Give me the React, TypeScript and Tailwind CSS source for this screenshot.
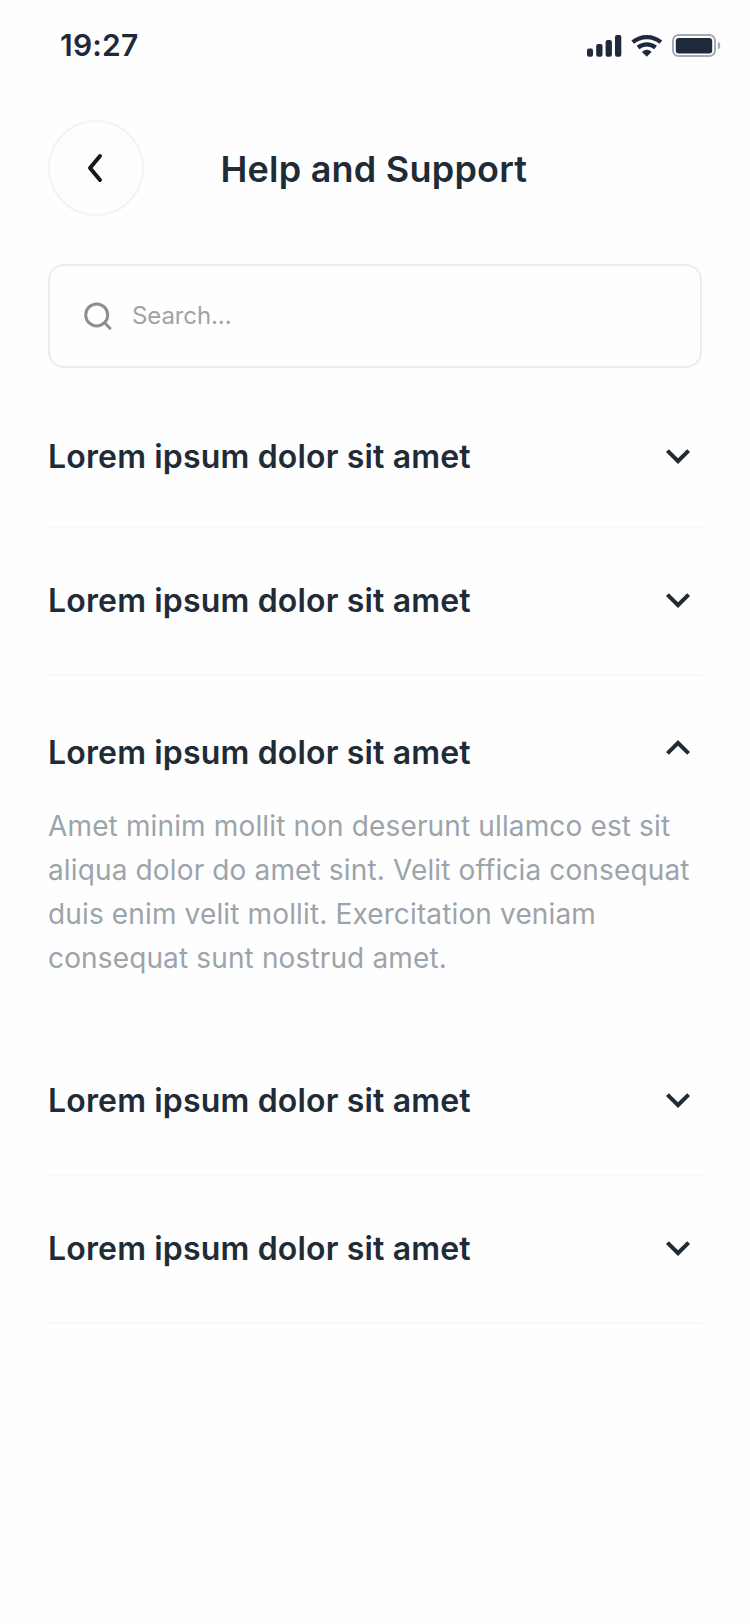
import { useState } from "react";

const QUESTION = "Lorem ipsum dolor sit amet";
const ANSWER =
  "Amet minim mollit non deserunt ullamco est sit aliqua dolor do amet sint. Velit officia consequat duis enim velit mollit. Exercitation veniam consequat sunt nostrud amet.";

function StatusBar() {
  return (
    <header className="flex h-[92px] items-center justify-between pr-[28px] pl-[60px] text-[#1e293b]">
      <time className="-mt-[2px] text-[30px] leading-[36px] font-semibold tracking-[0.2px]">19:27</time>
      <svg width="136" height="24" viewBox="0 0 136 24" fill="currentColor" aria-hidden="true">
        <rect x="1" y="14.5" width="6" height="8.2" rx="2" />
        <rect x="10.2" y="10" width="6.3" height="12.7" rx="2" />
        <rect x="19.6" y="6" width="6.3" height="16.7" rx="2" />
        <rect x="29" y="1" width="6.3" height="21.7" rx="2" />
        <g fill="none" stroke="currentColor" strokeWidth="4.2">
          <path d="M46.7 8.2 a22 22 0 0 1 28.2 0" />
          <path d="M52 13.5 a14 14 0 0 1 17.6 0" />
        </g>
        <path d="M60.8 22.3 L56.4 17.9 a7 7 0 0 1 8.8 0 z" stroke="currentColor" strokeWidth="0.8" strokeLinejoin="round" />
        <rect x="87" y="1" width="42" height="21" rx="5.5" fill="none" stroke="#a5aab3" strokeWidth="2" />
        <rect x="89.8" y="4" width="36.4" height="15.4" rx="3" />
        <path d="M132 7.8 a4.4 4.4 0 0 1 0 7.8 z" fill="#a5aab3" />
      </svg>
    </header>
  );
}

function Chevron({ open }: { open: boolean }) {
  return (
    <svg className="size-12 shrink-0" viewBox="0 0 24 24" fill="currentColor" aria-hidden="true">
      <path
        d={
          open
            ? "M12 8l-6 6 1.41 1.41L12 10.83l4.59 4.58L18 14z"
            : "M16.59 8.59L12 13.17 7.41 8.59 6 10l6 6 6-6z"
        }
      />
    </svg>
  );
}

const rows = [
  { row: "h-[160px] pt-[64px] border-b-2", icon: "-mt-px" },
  { row: "h-[148px] pt-[48px] border-b-2", icon: "-mt-px" },
  { row: "h-[352px] pt-[52px]", icon: "-mt-[9px]" },
  { row: "h-[148px] pt-[48px] border-b-2", icon: "-mt-px" },
  { row: "h-[148px] pt-[48px] border-b-2", icon: "-mt-px" },
];

export default function App() {
  const [active, setActive] = useState(2);
  return (
    <div className="flex min-h-[1624px] w-[750px] flex-col bg-[#fefefe] font-['Inter',sans-serif] text-[#1f2c37]">
      <StatusBar />
      <div className="flex items-center px-12 pt-[28px]">
        <button
          className="flex size-24 items-center justify-center rounded-full border-2 border-[#f1f2f5] bg-[#fdfdfd]"
          aria-label="Back"
        >
          <svg width="48" height="48" viewBox="0 0 48 48" fill="none" aria-hidden="true">
            <path d="M28 12 L18 24 L28 36" stroke="#171717" strokeWidth="4" strokeLinecap="round" strokeLinejoin="round" />
          </svg>
        </button>
        <h1 className="mt-[2px] ml-[76.5px] text-[36px] leading-[48px] font-semibold tracking-[0.22px]">Help and Support</h1>
      </div>
      <label className="mx-12 mt-12 flex h-[104px] items-center rounded-[16px] border-2 border-[#ebebf1] pl-8">
        <svg width="32" height="32" viewBox="0 0 32 32" fill="none" stroke="#8e8e8e" strokeWidth="3" strokeLinecap="round" aria-hidden="true">
          <circle cx="14.7" cy="14.9" r="11" />
          <path d="M22.8 23 L28 28.2" />
        </svg>
        <input
          className="ml-[18px] w-[400px] bg-transparent text-[24px] leading-8 tracking-[-0.1px] outline-none placeholder:text-[#9ca4ab]"
          placeholder="Search..."
        />
      </label>
      <main className="flex flex-col px-12">
        {rows.map((item, i) => (
          <section key={i} className={`border-[#f8f8f9] ${item.row}`}>
            <button className="flex h-12 w-full items-center justify-between text-left" onClick={() => setActive(i)}>
              <span className="mt-[2px] text-[32px] leading-[48px] font-semibold tracking-[0.005em]">{QUESTION}</span>
              <span className={item.icon}>
                <Chevron open={active === i} />
              </span>
            </button>
            {active === i && (
              <p className="mt-[28px] text-[28px] leading-[44px] tracking-[0.005em] text-[#9ca4ab]">{ANSWER}</p>
            )}
          </section>
        ))}
      </main>
    </div>
  );
}
